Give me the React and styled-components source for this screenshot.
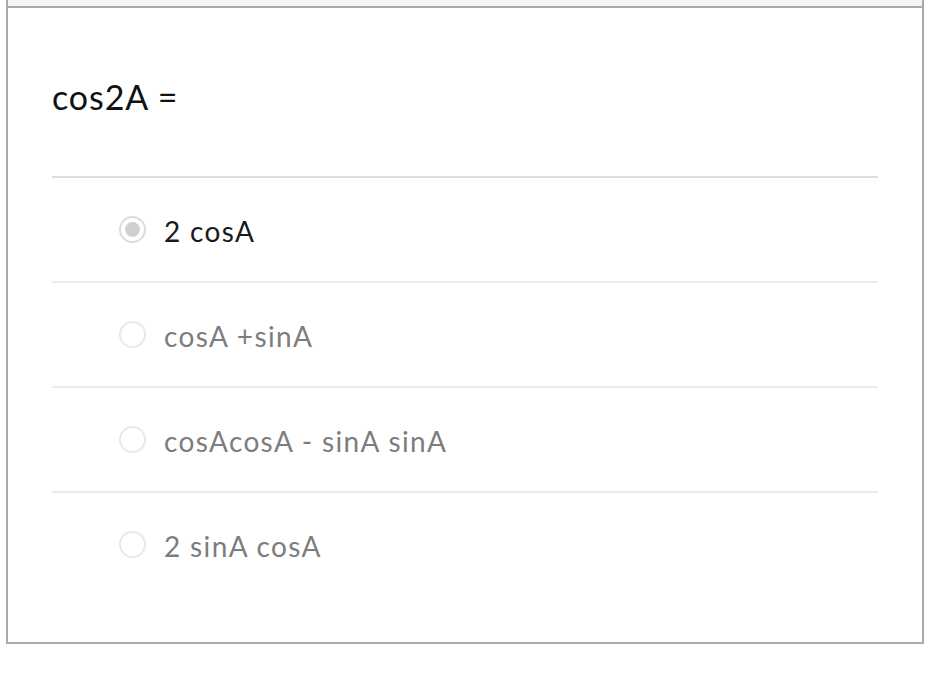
import styled, { createGlobalStyle } from 'styled-components';

const GlobalStyle = createGlobalStyle`
  body {
    margin: 0;
    background: #fff;
    font-family: Lato, 'Open Sans', sans-serif;
  }
`;

const options = [
  { label: '2 cosA', checked: true },
  { label: 'cosA +sinA' },
  { label: 'cosAcosA - sinA sinA' },
  { label: '2 sinA cosA' },
];

const App = () => {
  return (
    <Page>
      <GlobalStyle />
      <Card>
        <TopStrip />
        <Body>
          <Question>cos2A =</Question>
          <OptionList>
            {options.map((o) => (
              <Option key={o.label}>
                <Radio $checked={o.checked} />
                <OptionText $checked={o.checked}>{o.label}</OptionText>
              </Option>
            ))}
          </OptionList>
        </Body>
      </Card>
    </Page>
  );
};

const Page = styled.div`
  padding: 0 20px 0 6px;
`;

const Card = styled.div`
  border: 2px solid #aaa;
  border-top: none;
  background: #fff;
`;

const TopStrip = styled.div`
  height: 6px;
  background: #f4f4f4;
  border-bottom: 2px solid #aaa;
`;

const Body = styled.div`
  padding: 0 44px 46px;
`;

const Question = styled.div`
  font-size: 34px;
  line-height: 41px;
  letter-spacing: 0.9px;
  color: #111;
  padding: 68px 0 59px;
  border-bottom: 2px solid #dedede;
`;

const OptionList = styled.div`
  display: flex;
  flex-direction: column;
`;

const Option = styled.label`
  display: flex;
  align-items: center;
  gap: 18px;
  min-height: 103px;
  padding-left: 67px;
  border-bottom: 2px solid #ececec;
  &:last-child {
    border-bottom: none;
  }
`;

const Radio = styled.span`
  box-sizing: border-box;
  width: 27px;
  height: 27px;
  border-radius: 50%;
  border: 2px solid ${(p) => (p.$checked ? '#dcdcdc' : '#e8e8e8')};
  background: #fff;
  display: flex;
  align-items: center;
  justify-content: center;
  flex-shrink: 0;
  &::after {
    content: '';
    width: 15px;
    height: 15px;
    border-radius: 50%;
    background: ${(p) => (p.$checked ? '#d0d0d0' : 'transparent')};
  }
`;

const OptionText = styled.span`
  font-size: 28px;
  letter-spacing: 1.35px;
  margin-top: 2px;
  color: ${(p) => (p.$checked ? '#1a1a1a' : '#7d7d7d')};
`;

export default App;
